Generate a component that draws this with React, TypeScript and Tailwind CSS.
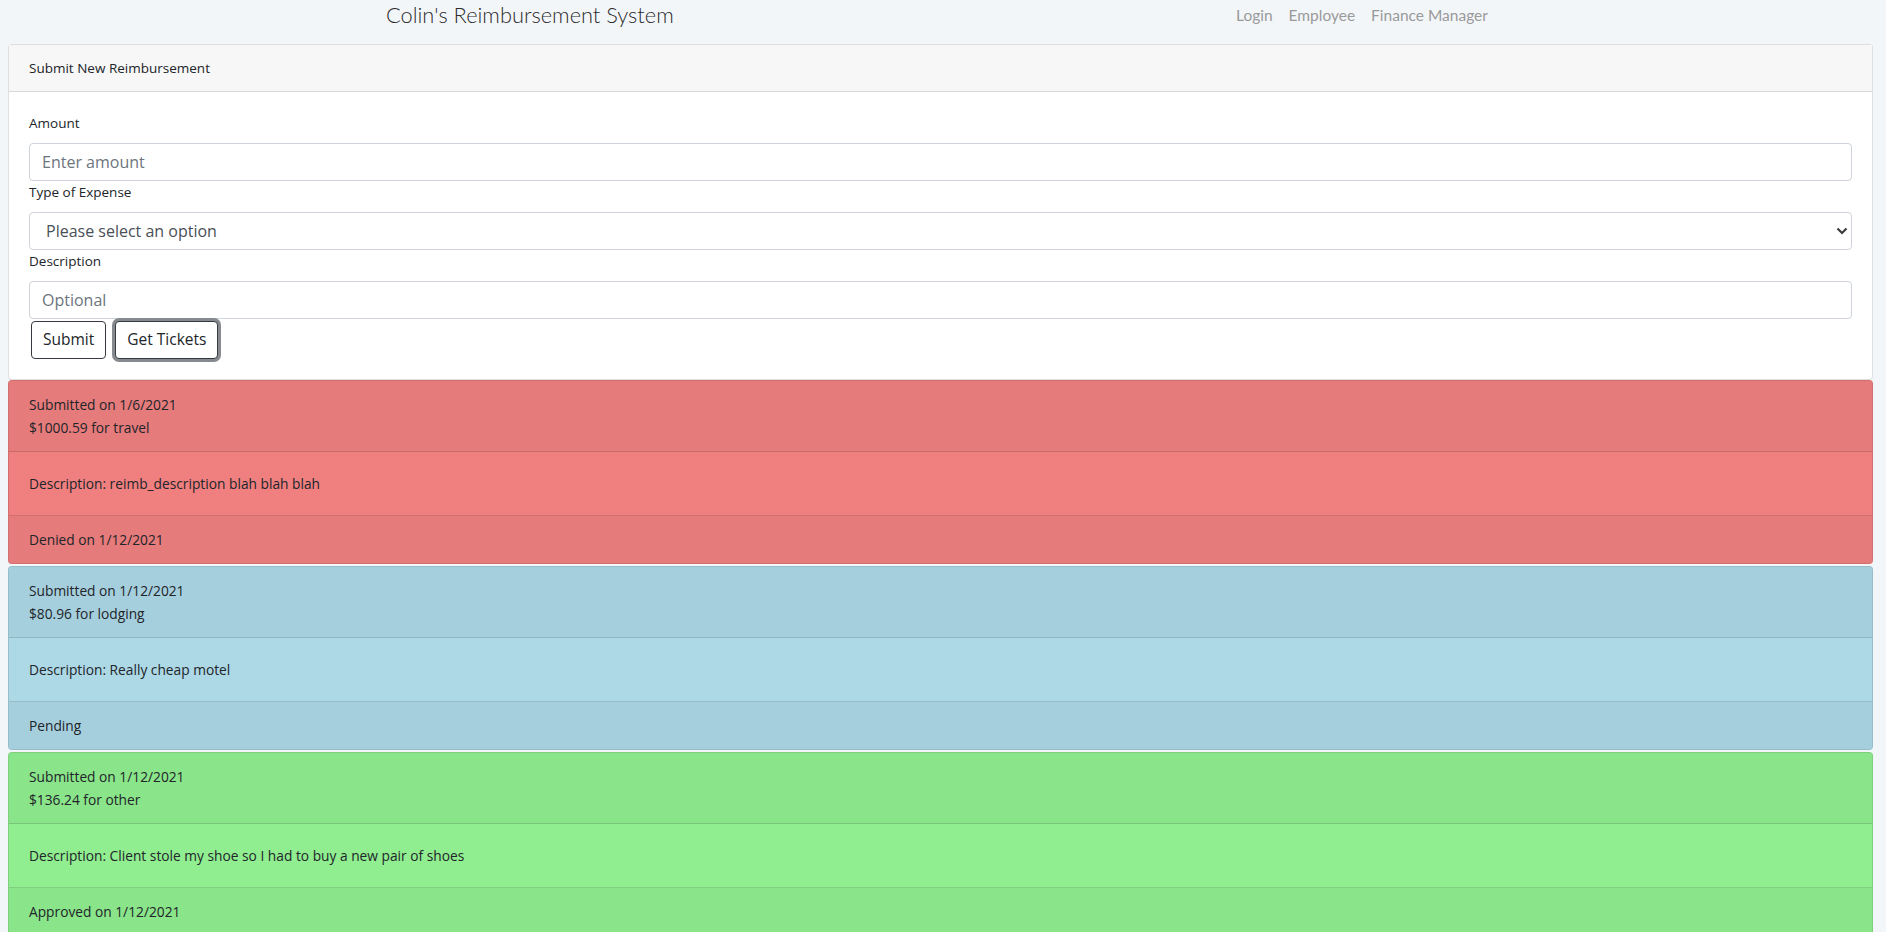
import React from "react";

type Item = {
  sub: string;
  amt: string;
  desc: string;
  status: string;
  head: string;
  body: string;
};

const items: Item[] = [
  {
    sub: "Submitted on 1/6/2021",
    amt: "$1000.59 for travel",
    desc: "Description: reimb_description blah blah blah",
    status: "Denied on 1/12/2021",
    head: "bg-[#e67b7b]",
    body: "bg-[#f08080]",
  },
  {
    sub: "Submitted on 1/12/2021",
    amt: "$80.96 for lodging",
    desc: "Description: Really cheap motel",
    status: "Pending",
    head: "bg-[#a6cfdd]",
    body: "bg-[#add8e6]",
  },
  {
    sub: "Submitted on 1/12/2021",
    amt: "$136.24 for other",
    desc: "Description: Client stole my shoe so I had to buy a new pair of shoes",
    status: "Approved on 1/12/2021",
    head: "bg-[#8ae48a]",
    body: "bg-[#90ee90]",
  },
];

function ReimbCard({ item, first }: { item: Item; first: boolean }) {
  return (
    <div
      className={`${first ? "" : "mt-[2px]"} rounded-[4px] border border-[rgba(0,0,0,0.125)] overflow-hidden text-[13.75px] ${item.body}`}
    >
      <div className={`${item.head} px-[20px] py-[12px] border-b border-[rgba(0,0,0,0.125)]`}>
        <div className="leading-[23px]">{item.sub}</div>
        <div className="leading-[23px]">{item.amt}</div>
      </div>
      <div className="px-[20px] py-[20px] leading-[23px] border-b border-[rgba(0,0,0,0.125)]">
        {item.desc}
      </div>
      <div className={`${item.head} px-[20px] py-[12px] leading-[23px]`}>{item.status}</div>
    </div>
  );
}

export default function App() {
  return (
    <div className="min-h-[932px] bg-[#f3f6f9] text-[#212529] font-['Open_Sans',sans-serif]">
      <header className="h-[44px] flex items-start">
        <h1 className="ml-[386px] w-[288px] whitespace-nowrap font-['Lato',sans-serif] font-light text-[21.8px] leading-[30px] text-[#2b2b2b]">
          Colin's Reimbursement System
        </h1>
        <nav className="ml-[554px] flex font-['Lato',sans-serif] text-[15.5px] leading-[30px] text-[#9a9a9a]">
          <span className="px-[8px]">Login</span>
          <span className="px-[8px]">Employee</span>
          <span className="px-[8px]">Finance Manager</span>
        </nav>
      </header>

      <div className="pl-[8px] pr-[13px]">
        <div className="rounded-[4px] border border-[rgba(0,0,0,0.125)] bg-white text-[13.5px]">
          <div className="bg-[#f7f7f7] px-[20px] py-[12px] leading-[22px] border-b border-[rgba(0,0,0,0.125)]">
            Submit New Reimbursement
          </div>
          <div className="p-[20px]">
            <label className="block leading-[23px] mb-[8px]">Amount</label>
            <input
              className="block w-full h-[38px] px-[12px] text-[16px] rounded-[4px] border border-[#ced4da] bg-white text-[#495057] placeholder:text-[#6c757d] outline-none"
              placeholder="Enter amount"
            />
            <label className="block leading-[23px] mb-[8px]">Type of Expense</label>
            <div className="relative">
              <select className="block w-full h-[38px] pl-[16px] pr-[24px] text-[16px] rounded-[4px] border border-[#ced4da] bg-white text-[#495057] appearance-none outline-none">
                <option>Please select an option</option>
                <option>Travel</option>
                <option>Lodging</option>
                <option>Food</option>
                <option>Other</option>
              </select>
              <svg
                className="absolute right-[4px] top-[15px] pointer-events-none"
                width="12"
                height="8"
                viewBox="0 0 12 8"
              >
                <polyline points="1.5,1.5 6,6 10.5,1.5" fill="none" stroke="#3c3c3c" strokeWidth="2.2" />
              </svg>
            </div>
            <label className="block leading-[23px] mb-[8px]">Description</label>
            <input
              className="block w-full h-[38px] px-[12px] text-[16px] rounded-[4px] border border-[#ced4da] bg-white text-[#495057] placeholder:text-[#6c757d] outline-none"
              placeholder="Optional"
            />
            <div className="flex mt-[2px] ml-[2px] gap-[9px]">
              <button className="h-[38px] px-[11px] text-[15.5px] rounded-[4px] border border-[#343a40] bg-white text-[#212529]">
                Submit
              </button>
              <button className="h-[38px] px-[11px] text-[15.5px] rounded-[4px] border border-[#343a40] bg-white text-[#212529] shadow-[0_0_0_3px_#878b8f]">
                Get Tickets
              </button>
            </div>
          </div>
        </div>

        {items.map((it, i) => (
          <ReimbCard key={i} item={it} first={i === 0} />
        ))}
      </div>
    </div>
  );
}
